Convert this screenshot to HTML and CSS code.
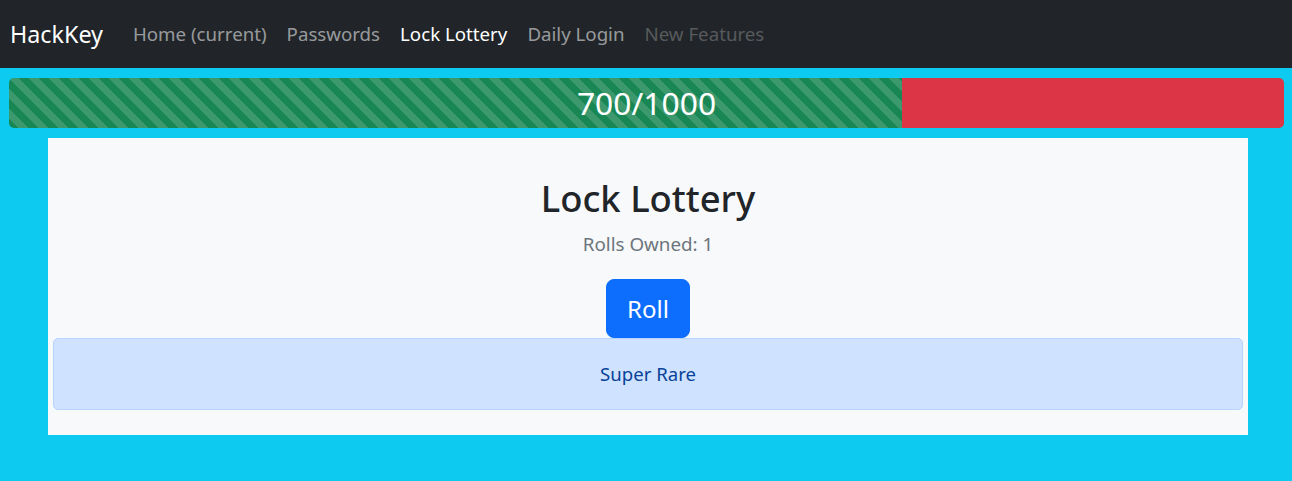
FILE: index.html
```html
<!DOCTYPE html>
<html lang="en">
<head>
<meta charset="utf-8">
<title>HackKey</title>
<link rel="stylesheet" href="styles.css">
</head>
<body>
<nav class="navbar">
  <a class="brand" href="#">HackKey</a>
  <ul class="nav">
    <li><a class="nav-link" href="#">Home (current)</a></li>
    <li><a class="nav-link" href="#">Passwords</a></li>
    <li><a class="nav-link active" href="#">Lock Lottery</a></li>
    <li><a class="nav-link" href="#">Daily Login</a></li>
    <li><a class="nav-link disabled" href="#">New Features</a></li>
  </ul>
</nav>
<div class="progress">
  <div class="bar-success" style="width:70%"></div>
  <div class="bar-danger"></div>
  <span class="progress-label">700/1000</span>
</div>
<main class="panel">
  <h3 class="title">Lock Lottery</h3>
  <p class="rolls">Rolls Owned: 1</p>
  <button class="btn-roll" type="button">Roll</button>
  <div class="alert">Super Rare</div>
</main>
</body>
</html>
```
FILE: styles.css
```css
* { box-sizing: border-box; }
html, body { margin: 0; padding: 0; }
body {
  background: #0dcaf0;
  font-family: "Noto Sans", "Open Sans", sans-serif;
  font-size: 18.6px;
  line-height: 1.5;
  color: #212529;
  min-height: 481px;
}
.navbar {
  background: #212529;
  height: 68px;
  display: flex;
  align-items: center;
  padding: 0 10px;
}
.brand {
  color: #fff;
  text-decoration: none;
  font-size: 23.3px;
  line-height: 36px;
  margin-right: 20px;
}
.nav {
  display: flex;
  list-style: none;
  margin: 0;
  padding: 0;
}
.nav-link {
  display: block;
  padding: 10px;
  color: rgba(255,255,255,.55);
  text-decoration: none;
  font-size: 18.7px;
  line-height: 30px;
}
.nav-link.active { color: #fff; }
.nav-link.disabled { color: rgba(255,255,255,.25); }
.progress {
  position: relative;
  display: flex;
  margin: 10px 8px 10px 9px;
  height: 50px;
  border-radius: 5px;
  overflow: hidden;
}
.bar-success {
  background-color: #198754;
  background-image: linear-gradient(45deg, rgba(255,255,255,.15) 25%, transparent 25%, transparent 50%, rgba(255,255,255,.15) 50%, rgba(255,255,255,.15) 75%, transparent 75%, transparent);
  background-size: 20px 20px;
}
.bar-danger { flex: 1; background: #dc3545; }
.progress-label {
  position: absolute;
  inset: 0;
  display: flex;
  align-items: center;
  justify-content: center;
  color: #fff;
  font-size: 31.8px;
}
.panel {
  width: 1200px;
  margin: 0 auto 0 48px;
  background: #f8f9fa;
  padding: 39px 5px 25px;
  display: flex;
  flex-direction: column;
  align-items: center;
}
.title {
  margin: 0 0 10px;
  font-size: 36.4px;
  font-weight: 500;
  line-height: 42px;
}
.rolls {
  margin: 0 0 20px;
  color: #6c757d;
  font-size: 18.8px;
  line-height: 30px;
}
.btn-roll {
  font-family: inherit;
  font-size: 24px;
  line-height: 37px;
  padding: 10px 20px;
  border: 1px solid #0d6efd;
  background: #0d6efd;
  color: #fff;
  border-radius: 8px;
}
.alert {
  align-self: stretch;
  background: #cfe2ff;
  border: 1px solid #b6d4fe;
  color: #084298;
  border-radius: 5px;
  padding: 20px;
  text-align: center;
  line-height: 30px;
}
```
